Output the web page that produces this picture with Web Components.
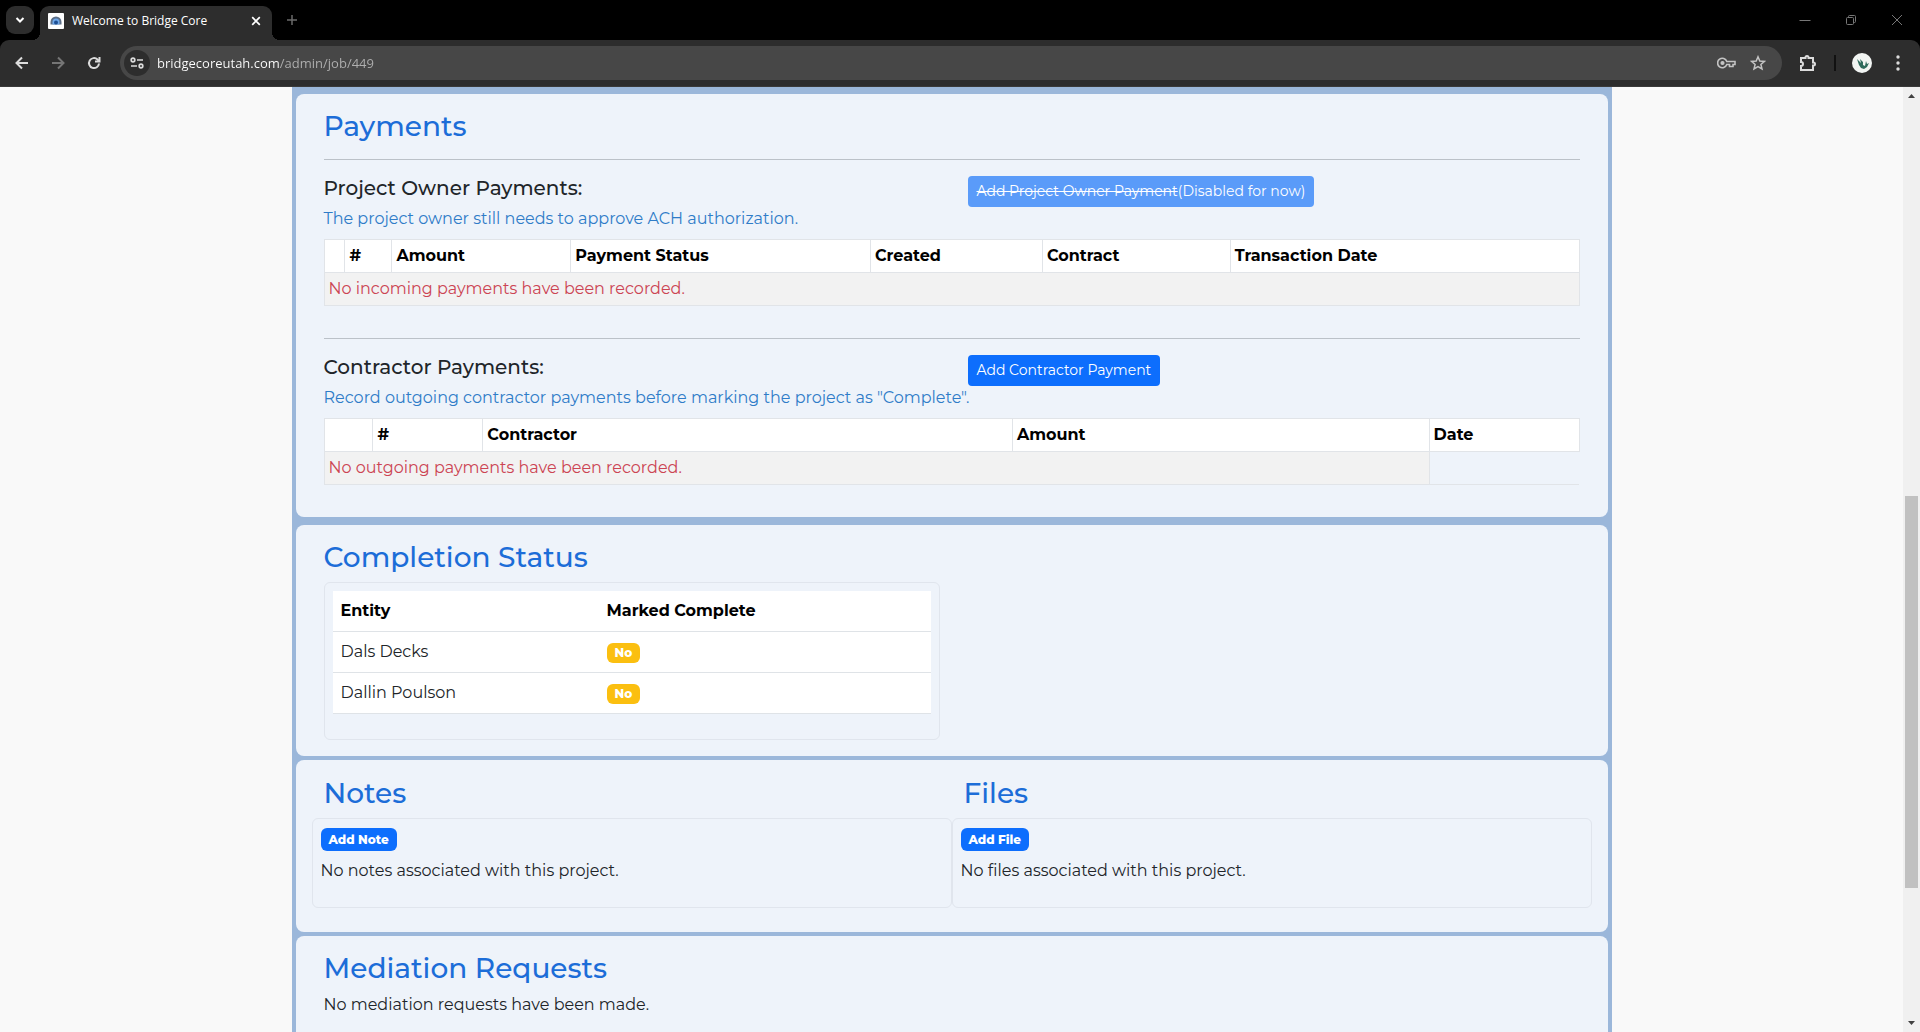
<!DOCTYPE html>
<html lang="en">
<head>
<meta charset="utf-8">
<title>Welcome to Bridge Core</title>
<style>
  html, body { height: 100%; }
  body { margin: 0; overflow: hidden; background: #f9f9f9; color: #212529; font: 400 16px/24px Montserrat, Inter, sans-serif; }
</style>
</head>
<body>
<app-window></app-window>

<template id="app-window">
  <style>
    :host { display: flex; flex-direction: column; height: 100vh; }
    .view { flex: 1; min-height: 0; display: flex; }
    main { flex: 1; min-width: 0; overflow: hidden; }
  </style>
  <browser-tabs></browser-tabs>
  <browser-toolbar></browser-toolbar>
  <div class="view">
    <main><job-page></job-page></main>
    <scroll-rail></scroll-rail>
  </div>
</template>

<template id="browser-tabs">
  <style>
    :host { display: flex; height: 40px; box-sizing: border-box; padding: 6px 0 0 6px; background: #000; color: #fff; font: 12px/16px "Open Sans", "Noto Sans", sans-serif; }
    button { border: 0; padding: 0; background: none; color: inherit; display: grid; place-items: center; }
    svg { display: block; fill: none; stroke: currentColor; }
    .search { width: 28px; height: 28px; border-radius: 9px; background: #2d2d2d; }
    .tab { position: relative; display: flex; align-items: center; gap: 8px; width: 232px; box-sizing: border-box; height: 34px; margin-left: 6px; padding: 0 8px 4px; background: #2d2d2d; border-radius: 9px 9px 0 0; }
    .tab::before, .tab::after { content: ""; position: absolute; bottom: 0; width: 8px; height: 8px; }
    .tab::before { right: 100%; background: radial-gradient(circle at 0 0, transparent 8px, #2d2d2d 8px); }
    .tab::after { left: 100%; background: radial-gradient(circle at 100% 0, transparent 8px, #2d2d2d 8px); }
    .title { flex: 1; }
    .close { width: 16px; height: 16px; }
    .new { width: 28px; height: 28px; margin-left: 6px; color: #6b6b6b; }
    .win { margin-left: auto; display: flex; color: #777; }
    .win button { width: 46px; height: 28px; }
  </style>
  <button class="search" aria-label="Search tabs"><svg width="10" height="8" stroke-width="2"><path d="M1.500 2l3.500 3.500L8.500 2"/></svg></button>
  <div class="tab">
    <svg width="16" height="16" viewBox="0 0 16 16" stroke="none"><rect width="16" height="16" rx="1" fill="#fff" stroke="none"/><path d="M2.500 11.500V9a5.500 5.500 0 0 1 11 0v2.500z" fill="#5c6f88" stroke="none"/><path d="M4.500 11.500V9a3.500 3.500 0 0 1 7 0v2.500z" fill="#6fa8ea" stroke="none"/><circle cx="8" cy="9.500" r="2" fill="#1d4f94" stroke="none"/></svg>
    <span class="title">Welcome to Bridge Core</span>
    <button class="close" aria-label="Close tab"><svg width="10" height="10" stroke-width="1.700"><path d="M1.200 1.200l7.600 7.600M8.800 1.200L1.200 8.800"/></svg></button>
  </div>
  <button class="new" aria-label="New tab"><svg width="12" height="12" stroke-width="1.500"><path d="M6 1v10M1 6h10"/></svg></button>
  <div class="win">
    <button aria-label="Minimize"><svg width="12" height="12"><path d="M.500 6.500h11"/></svg></button>
    <button aria-label="Restore"><svg width="12" height="12"><rect x="1.500" y="3.500" width="7" height="7" rx="1"/><path d="M3.500 3V2.500q0-1 1-1h5q1 0 1 1v5q0 1-1 1H9"/></svg></button>
    <button aria-label="Close"><svg width="12" height="12"><path d="M1 1l10 10M11 1L1 11"/></svg></button>
  </div>
</template>

<template id="browser-toolbar">
  <style>
    :host { display: block; background: #000; font: 13px/18px "Open Sans", "Noto Sans", sans-serif; }
    .bar { display: flex; align-items: center; height: 47px; box-sizing: border-box; padding: 0 4px 6px; background: #2d2d2d; border-radius: 9px 9px 0 0; color: #dcdcdc; border-bottom: 1px solid #3a3a3a; }
    button { border: 0; padding: 0; background: none; color: inherit; display: grid; place-items: center; width: 36px; height: 34px; }
    svg { display: block; fill: none; stroke: currentColor; stroke-width: 2; }
    .off { color: #757575; }
    .omni { flex: 1; display: flex; align-items: center; height: 34px; margin: 5px 8px 0; padding: 0 8px 0 4px; box-sizing: border-box; border-radius: 17px; background: #474747; }
    .bar > button, .bar > i { margin-top: 5px; }
    .site { width: 26px; height: 26px; border-radius: 50%; background: #2d2d2d; }
    input { flex: 1; min-width: 0; border: 0; outline: 0; padding: 0 0 0 7px; font: inherit; height: 22px; color: transparent; background: linear-gradient(90deg, #fff 130px, #b0b0b0 130px); -webkit-background-clip: text; background-clip: text; }
    .omni .act { width: 32px; color: #c4c4c4; }
    i { width: 2px; height: 16px; background: #111; margin: 0 8px; }
  </style>
  <div class="bar">
    <button aria-label="Back"><svg width="14" height="14"><path d="M13 7H2M7 1.500L1.500 7 7 12.500"/></svg></button>
    <button class="off" aria-label="Forward"><svg width="14" height="14"><path d="M1 7h11M7 1.500L12.500 7 7 12.500"/></svg></button>
    <button aria-label="Reload"><svg width="14" height="14"><path d="M12 7.500A5 5 0 1 1 10.500 3.500L12 5"/><path d="M12.500 1v4.500H8"/></svg></button>
    <div class="omni">
      <button class="site" aria-label="Site information"><svg width="14" height="12"><g stroke-width="1.700"><circle cx="3" cy="3" r="1.800"/><path d="M7 3h6M1 9h6"/><circle cx="11" cy="9" r="1.800"/></g></svg></button>
      <input aria-label="Address" value="bridgecoreutah.com/admin/job/449">
      <button class="act" aria-label="Passwords"><svg width="19" height="12"><g stroke-width="1.600"><path d="M9.800 4.500A4.700 4.700 0 1 0 9.800 7.500H12.500V9.500H16V7.500H18V4.500z"/><circle cx="5.500" cy="6" r="1.300" fill="currentColor"/></g></svg></button>
      <button class="act" aria-label="Bookmark"><svg width="16" height="16"><path stroke-width="1.500" d="M8 1.800l1.800 4.200 4.600.400-3.500 3 1.100 4.500L8 11.500l-4 2.400 1.100-4.500-3.500-3 4.600-.400z"/></svg></button>
    </div>
    <button aria-label="Extensions"><svg width="18" height="18"><path d="M2 4h4.500V3.500a1.500 1.500 0 0 1 3 0V4H14v4.500h.500a1.500 1.500 0 0 1 0 3H14V16H2v-4a2 2 0 0 0 0-4z"/></svg></button>
    <i></i>
    <button aria-label="Profile"><svg width="20" height="20"><circle cx="10" cy="10" r="10" fill="#f2f5f3" stroke="none"/><path d="M5 6l4 4-1-4 3 3v3l2 1 1-5 1 3 2-1-2 4-3 2-3-1-2-3z" fill="#2f6b5c" stroke="none"/></svg></button>
    <button aria-label="Menu"><svg width="4" height="16"><g fill="currentColor" stroke="none"><circle cx="2" cy="2" r="1.700"/><circle cx="2" cy="8" r="1.700"/><circle cx="2" cy="14" r="1.700"/></g></svg></button>
  </div>
</template>

<template id="scroll-rail">
  <style>
    :host { display: flex; flex-direction: column; align-items: center; width: 17px; background: #f0f0f0; }
    svg { display: block; flex: none; fill: #404040; }
    .track { flex: 1; width: 13px; display: flex; flex-direction: column; }
    .before { flex: 392; } .thumb { flex: 392; background: #c1c1c1; } .after { flex: 127; }
  </style>
  <svg width="17" height="17"><path d="M5 11h7L8.500 7z"/></svg>
  <div class="track"><div class="before"></div><div class="thumb"></div><div class="after"></div></div>
  <svg width="17" height="17"><path d="M5 6h7L8.500 10z"/></svg>
</template>

<template id="job-page">
  <style>
    :host { display: block; box-sizing: border-box; max-width: 1320px; margin: 0 auto; padding: 7px 4px 4px; background: #9bb7da; }
    .stack { display: flex; flex-direction: column; gap: 4px; }
    .first { margin-bottom: 4px; }
    .last { padding-bottom: 48px; }
    .status { box-sizing: border-box; width: calc(50% - 12px); padding: 8px 8px 25px; border: 1px solid #e0e5ed; border-radius: 6px; }
    .pair { display: flex; margin: 0 -12px 8px; }
    .pair > * { flex: 1; }
    p { margin: 0; }
  </style>
  <div class="stack">
    <job-card heading="Payments" class="first">
      <payment-group heading="Project Owner Payments:" note="The project owner still needs to approve ACH authorization.">
        <action-button slot="action" disabled><s>Add Project Owner Payment</s>(Disabled for now)</action-button>
        <payment-table columns="|#|Amount|Payment Status|Created|Contract|Transaction Date" widths="21,47,179,300,172,188,349" span="7" empty="No incoming payments have been recorded."></payment-table>
      </payment-group>
      <payment-group heading="Contractor Payments:" note="Record outgoing contractor payments before marking the project as &quot;Complete&quot;.">
        <action-button slot="action">Add Contractor Payment</action-button>
        <payment-table columns="|#|Contractor|Amount|Date" widths="49,110,530,417,150" span="4" empty="No outgoing payments have been recorded."></payment-table>
      </payment-group>
    </job-card>
    <job-card heading="Completion Status">
      <div class="status"><status-table></status-table></div>
    </job-card>
    <job-card>
      <div class="pair">
        <attachment-box heading="Notes" action="Add Note">No notes associated with this project.</attachment-box>
        <attachment-box heading="Files" action="Add File">No files associated with this project.</attachment-box>
      </div>
    </job-card>
    <job-card heading="Mediation Requests" class="last"><p>No mediation requests have been made.</p></job-card>
  </div>
</template>

<template id="job-card">
  <style>
    :host { display: block; padding: 16px 28px; background: #eef3fa; border-radius: 8px; }
    h3 { margin: 0 0 8px; font-weight: 500; font-size: 28px; line-height: 33px; color: #1c6dd8; }
  </style>
  <slot></slot>
</template>

<template id="payment-group">
  <style>
    :host { display: block; padding-bottom: 16px; }
    hr { margin: 16px 0; border: 0; border-top: 1px solid #bbc1c8; }
    .head { display: flex; align-items: flex-start; height: 31px; }
    h5 { margin: 0; flex: 0 0 644px; font-weight: 500; font-size: 20px; line-height: 24px; }
    p { margin: 0 0 8px; color: #2f7cc8; }
  </style>
  <hr>
  <div class="head"><h5></h5><slot name="action"></slot></div>
  <p></p>
  <slot></slot>
</template>

<template id="action-button">
  <style>
    :host { display: block; }
    button { display: block; height: 31px; padding: 0 8px; border: 1px solid transparent; border-radius: 4px; background: #0d6efd border-box; color: #fff; font: 400 14px/21px Montserrat, Inter, sans-serif; }
    button:disabled { background: #5a9bf9 border-box; }
    :host([compact]) button { height: 23px; border-width: 0; border-radius: 6px; font-weight: 800; font-size: 12px; line-height: 12px; }
  </style>
  <button><slot></slot></button>
</template>

<template id="payment-table">
  <style>
    :host { display: block; }
    table { width: 100%; table-layout: fixed; border-collapse: collapse; }
    th, td { height: 24px; padding: 4px; text-align: left; border: 1px solid #e1e4e8; }
    th { background: #fff; color: #000; font-weight: 700; }
    td { background: #f2f2f2; color: #cc4453; }
    tbody tr { border-bottom: 1px solid #e1e4e8; }
  </style>
  <table><colgroup></colgroup><thead><tr></tr></thead><tbody><tr><td></td></tr></tbody></table>
</template>

<template id="status-table">
  <style>
    :host { display: block; }
    table { width: 100%; border-spacing: 0; background: #fff; }
    th, td { height: 24px; padding: 8px; text-align: left; border-bottom: 1px solid #dfe3e7; }
    th { color: #000; font-weight: 700; }
    th:first-child { width: 250px; }
    span { display: block; width: fit-content; padding: 4px 8px; margin-top: 2px; border-radius: 6px; background: #fbbf10; color: #fff; font-weight: 800; font-size: 12px; line-height: 12px; }
  </style>
  <table>
    <thead><tr><th>Entity</th><th>Marked Complete</th></tr></thead>
    <tbody>
      <tr><td>Dals Decks</td><td><span>No</span></td></tr>
      <tr><td>Dallin Poulson</td><td><span>No</span></td></tr>
    </tbody>
  </table>
</template>

<template id="attachment-box">
  <style>
    :host { display: block; }
    h3 { margin: 0 12px 8px; font-weight: 500; font-size: 28px; line-height: 34px; color: #1c6dd8; }
    .box { padding: 9px 8px 24px; border: 1px solid #e0e5ed; border-radius: 6px; }
    action-button { margin-bottom: 8px; }
  </style>
  <h3></h3>
  <div class="box"><action-button compact></action-button><slot></slot></div>
</template>

<script>
  class Base extends HTMLElement {
    constructor() {
      super();
      this.attachShadow({ mode: "open" }).append(document.getElementById(this.localName).content.cloneNode(true));
    }
    find(selector) { return this.shadowRoot.querySelector(selector); }
  }

  class JobCard extends Base {
    connectedCallback() {
      if (!this.hasAttribute("heading") || this.find("h3")) return;
      const title = document.createElement("h3");
      title.textContent = this.getAttribute("heading");
      this.find("slot").before(title);
    }
  }

  class PaymentGroup extends Base {
    connectedCallback() {
      this.find("h5").textContent = this.getAttribute("heading");
      this.find("p").textContent = this.getAttribute("note");
    }
  }

  class ActionButton extends Base {
    connectedCallback() { this.find("button").disabled = this.hasAttribute("disabled"); }
  }

  class PaymentTable extends Base {
    connectedCallback() {
      const widths = this.getAttribute("widths").split(",").map(Number);
      const total = widths.reduce((a, b) => a + b, 0);
      this.find("colgroup").replaceChildren(...widths.map(w => {
        const col = document.createElement("col");
        col.style.width = (w / total * 100) + "%";
        return col;
      }));
      this.find("thead tr").replaceChildren(...this.getAttribute("columns").split("|").map(name => {
        const th = document.createElement("th");
        th.textContent = name;
        return th;
      }));
      const cell = this.find("td");
      cell.colSpan = Number(this.getAttribute("span"));
      cell.textContent = this.getAttribute("empty");
    }
  }

  class AttachmentBox extends Base {
    connectedCallback() {
      this.find("h3").textContent = this.getAttribute("heading");
      this.find("action-button").textContent = this.getAttribute("action");
    }
  }

  customElements.define("action-button", ActionButton);
  customElements.define("payment-table", PaymentTable);
  customElements.define("payment-group", PaymentGroup);
  customElements.define("attachment-box", AttachmentBox);
  customElements.define("job-card", JobCard);
  for (const name of ["status-table", "job-page", "scroll-rail", "browser-toolbar", "browser-tabs", "app-window"]) {
    customElements.define(name, class extends Base {});
  }
</script>
</body>
</html>
